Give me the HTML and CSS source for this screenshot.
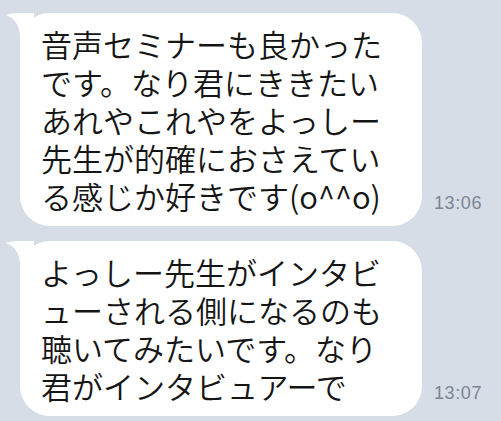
FILE: index.html
```html
<!DOCTYPE html>
<html lang="ja">
<head>
  <meta charset="UTF-8">
  <meta name="viewport" content="width=device-width, initial-scale=1.0">
  <title>Chat</title>
  <link rel="stylesheet" href="styles.css">
</head>
<body>
<div class="chat">
  <div class="row">
    <div class="bubble">
      <svg class="tail" width="30" height="40" viewBox="0 0 30 40"><path d="M2 2 C8 0 14 0 20 0 L30 0 L30 40 L16 40 L16 24 C16 12 10 5 2 2 Z" fill="#fff"/></svg>
      <p class="text">音声セミナーも良かったです。なり君にききたいあれやこれやをよっしー先生が的確におさえている感じか好きです(o^^o)</p>
    </div>
    <span class="time">13:06</span>
  </div>
  <div class="row">
    <div class="bubble">
      <svg class="tail" width="30" height="40" viewBox="0 0 30 40"><path d="M2 2 C8 0 14 0 20 0 L30 0 L30 40 L16 40 L16 24 C16 12 10 5 2 2 Z" fill="#fff"/></svg>
      <p class="text">よっしー先生がインタビューされる側になるのも聴いてみたいです。なり君がインタビュアーで</p>
    </div>
    <span class="time">13:07</span>
  </div>
</div>
</body>
</html>
```

FILE: styles.css
```css
body {
  margin: 0;
  background-color: #d6dde6;
  font-family: "Noto Sans CJK JP", "Noto Sans", sans-serif;
}
.chat {
  display: flex;
  flex-direction: column;
  gap: 15px;
  padding: 13px 0 0 20px;
}
.row {
  display: flex;
  align-items: flex-end;
  gap: 12px;
}
.bubble {
  position: relative;
  width: 402px;
  box-sizing: border-box;
  padding: 12px 21px 11px;
  background-color: white;
  border-radius: 30px;
}
.tail {
  position: absolute;
  left: -16px;
  top: 0;
}
.text {
  position: relative;
  margin: 0;
  font-size: 31px;
  font-weight: 350;
  line-height: 38px;
  color: #151515;
  line-break: anywhere;
}
.time {
  margin-bottom: 12px;
  font-family: "Liberation Sans", Arial, sans-serif;
  font-size: 18px;
  letter-spacing: 0.6px;
  color: #7c8694;
}
```
